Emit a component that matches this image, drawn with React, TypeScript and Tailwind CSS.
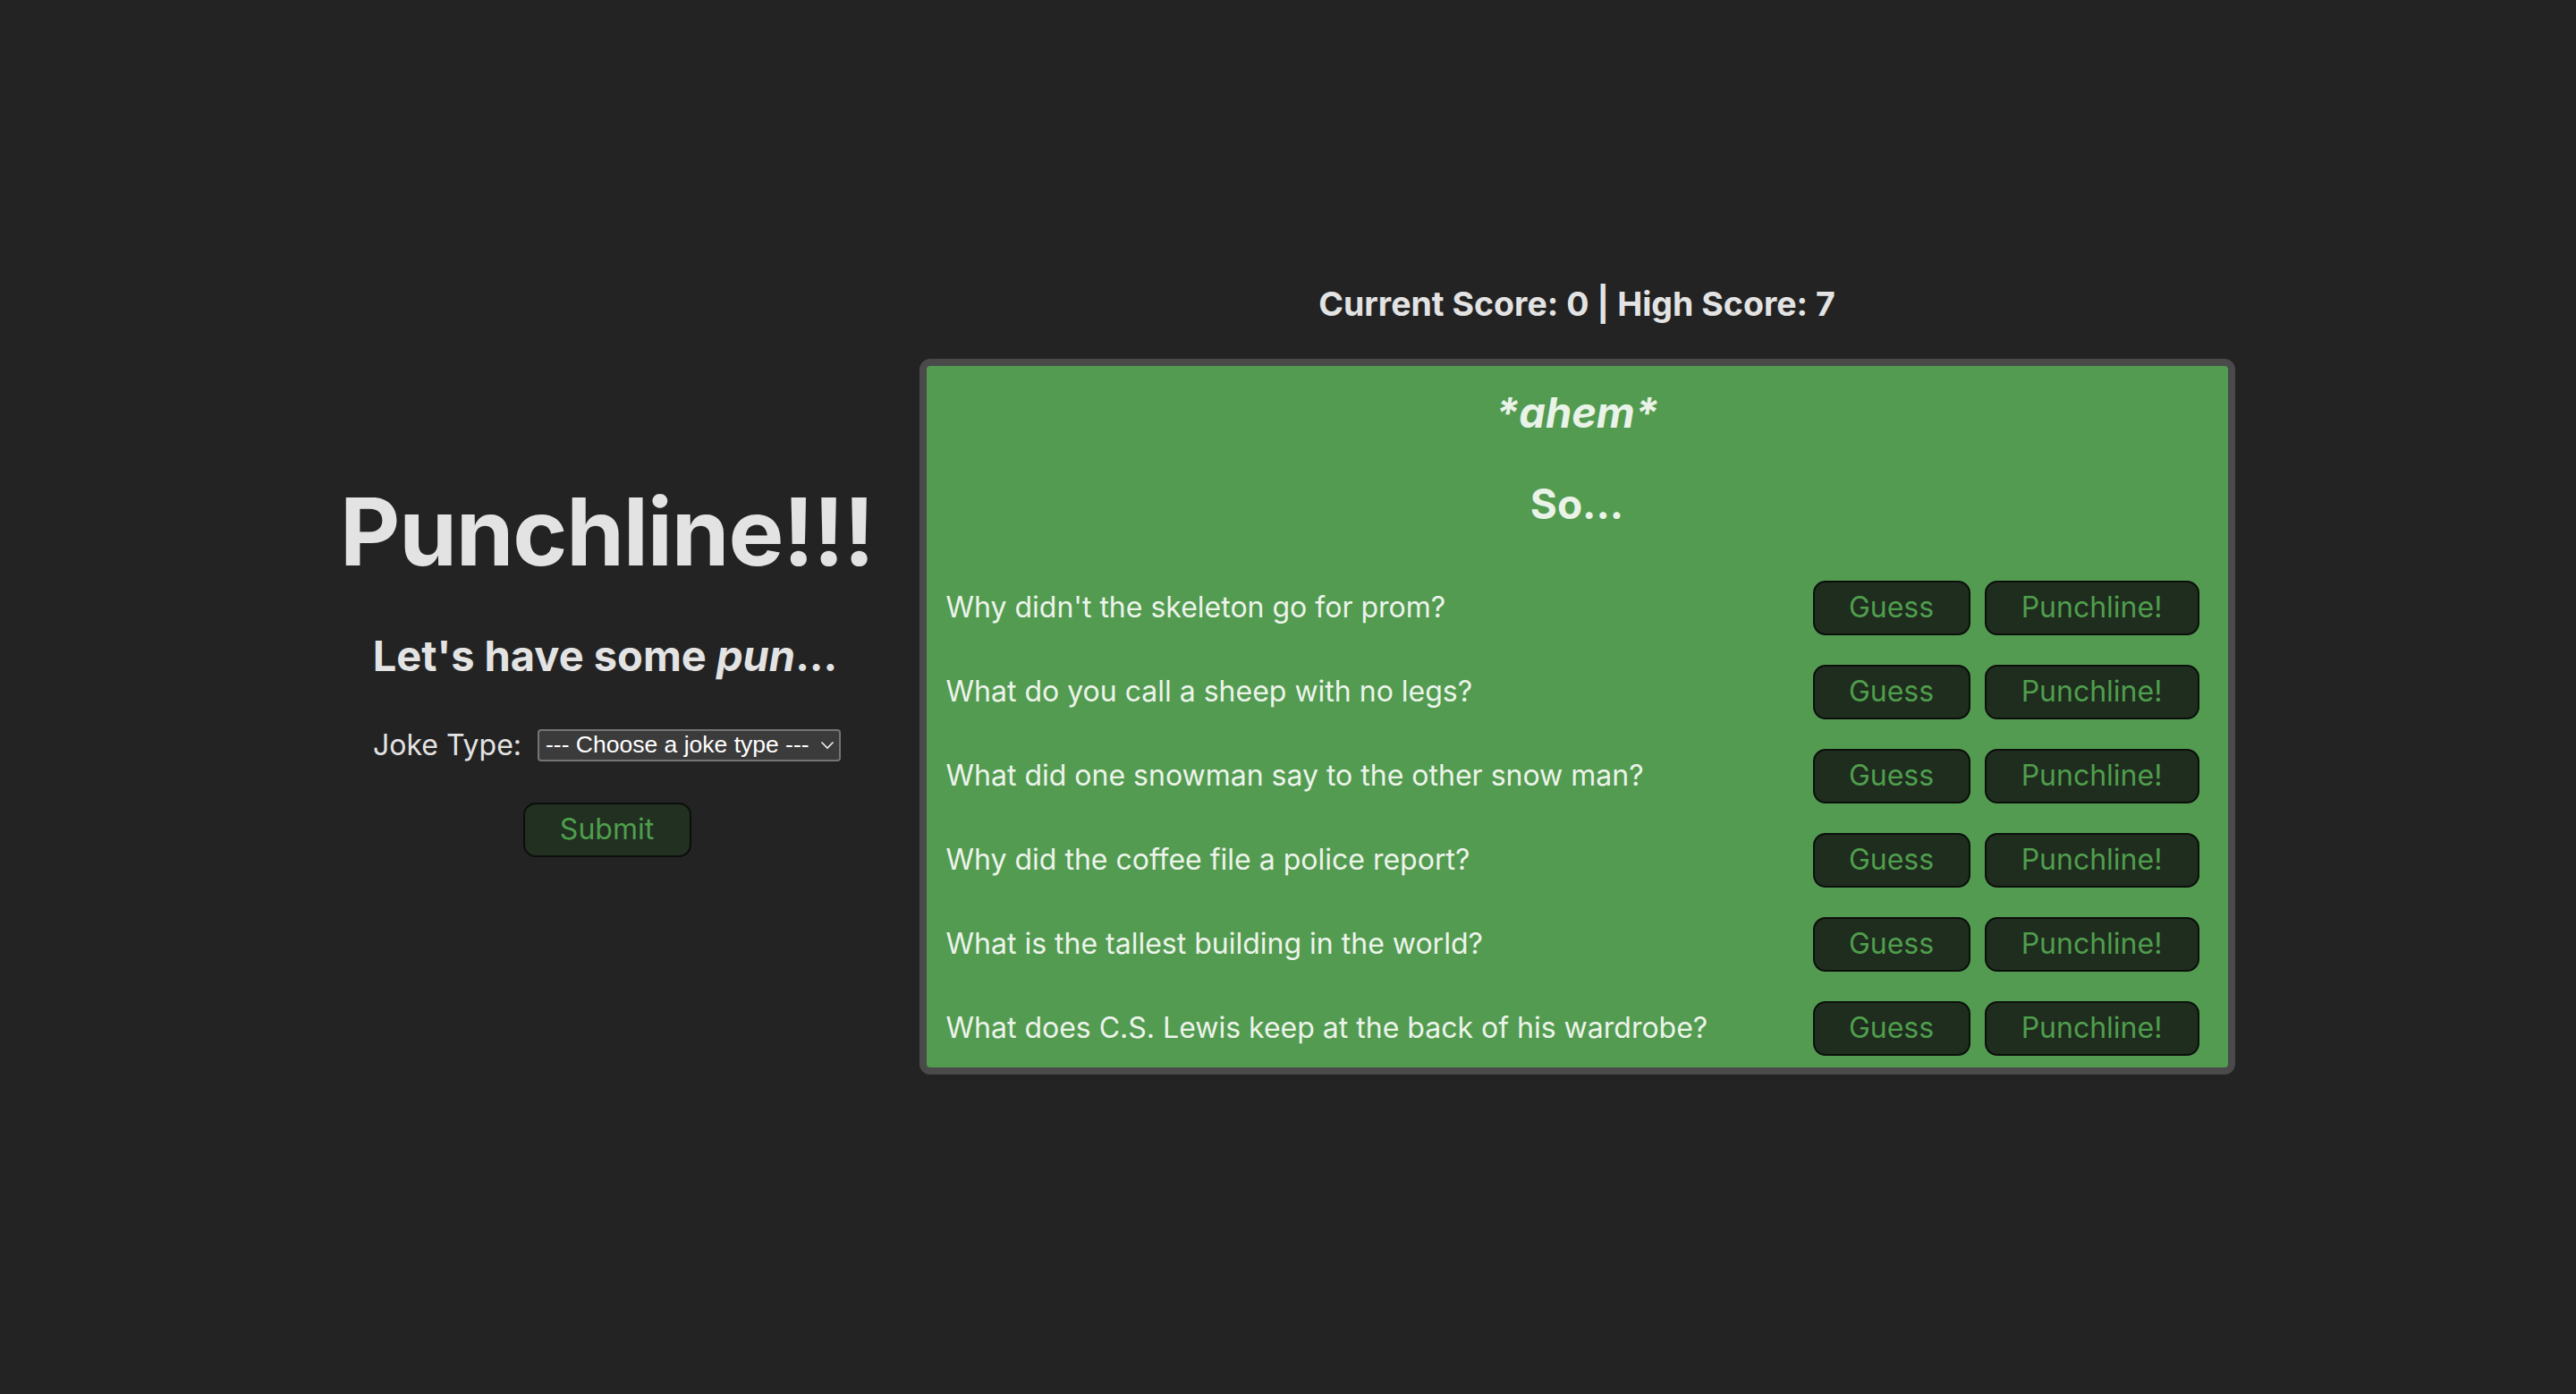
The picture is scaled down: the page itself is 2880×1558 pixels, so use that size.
import { useState } from "react";

const jokes = [
  "Why didn't the skeleton go for prom?",
  "What do you call a sheep with no legs?",
  "What did one snowman say to the other snow man?",
  "Why did the coffee file a police report?",
  "What is the tallest building in the world?",
  "What does C.S. Lewis keep at the back of his wardrobe?",
];

const JokeRow = ({ question }: { question: string }) => {
  return (
    <div className="flex items-center justify-between h-[61px] pr-[10px]">
      <p className="text-[32px] leading-none text-[#ecf4ea]">{question}</p>
      <div className="flex gap-4">
        <button className="h-[61px] w-[176px] rounded-[14px] border-2 border-[#0b0f0b] bg-[#1f2d1e] text-[32px] text-[#4f9e4d]">
          Guess
        </button>
        <button className="h-[61px] w-[240px] rounded-[14px] border-2 border-[#0b0f0b] bg-[#1f2d1e] text-[32px] text-[#4f9e4d]">
          Punchline!
        </button>
      </div>
    </div>
  );
};

export default function App() {
  const [jokeType, setJokeType] = useState("");
  const [score] = useState(0);
  const [highScore] = useState(7);

  return (
    <div
      className="min-h-screen bg-[#232323] flex items-center justify-center gap-[56px] pb-[36px]"
      style={{ fontFamily: "Inter, 'Noto Sans', sans-serif" }}
    >
      <div className="w-[590px] flex flex-col items-center pb-[23px] text-[#e3e3e3]">
        <h1 className="text-[104px] leading-none font-bold tracking-[-1.2px] pl-[4px]">Punchline!!!</h1>
        <h2 className="mt-[63px] text-[47px] leading-none font-bold">
          Let's have some <em>pun</em>...
        </h2>
        <div className="mt-[59px] flex items-center gap-[18px] pl-[4px]">
          <label className="text-[32px] leading-none">Joke Type:</label>
          <div className="relative">
            <select
              value={jokeType}
              onChange={(e) => setJokeType(e.target.value)}
              className="appearance-none h-[36px] w-[339px] rounded-[4px] border-2 border-[#757575] bg-[#3b3b3b] pl-[7px] text-[26.5px] leading-none text-white"
              style={{ fontFamily: "'Liberation Sans', Arial, sans-serif" }}
            >
              <option value="">--- Choose a joke type ---</option>
              <option value="general">General</option>
              <option value="programming">Programming</option>
              <option value="knock-knock">Knock-knock</option>
            </select>
            <svg
              className="pointer-events-none absolute right-[7px] top-[12px]"
              width="16"
              height="11"
              viewBox="0 0 16 11"
              fill="none"
            >
              <path d="M1.5 2.5L8 9L14.5 2.5" stroke="#f0f0f0" strokeWidth="1.6" />
            </svg>
          </div>
        </div>
        <button className="mt-[46px] ml-[4px] h-[61px] w-[188px] rounded-[14px] border-2 border-[#0b0f0b] bg-[#213021] text-[32px] text-[#4f9e4d]">
          Submit
        </button>
      </div>

      <div className="flex flex-col items-center">
        <h3 className="text-[37.5px] leading-none font-bold text-[#e3e3e3]">
          Current Score: {score} | High Score: {highScore}
        </h3>
        <div className="mt-[42px] w-[1471px] rounded-[12px] border-8 border-[#4a4a4a] bg-[#539b51] pt-[28px] pb-[13px] px-[22px]">
          <h2 className="text-center text-[47px] leading-none font-bold italic text-[#eaf3e8]">*ahem*</h2>
          <h2 className="mt-[56px] text-center text-[46px] leading-none font-bold text-[#eaf3e8]">So...</h2>
          <div className="mt-[63px] flex flex-col gap-[33px]">
            {jokes.map((q) => (
              <JokeRow key={q} question={q} />
            ))}
          </div>
        </div>
      </div>
    </div>
  );
}
